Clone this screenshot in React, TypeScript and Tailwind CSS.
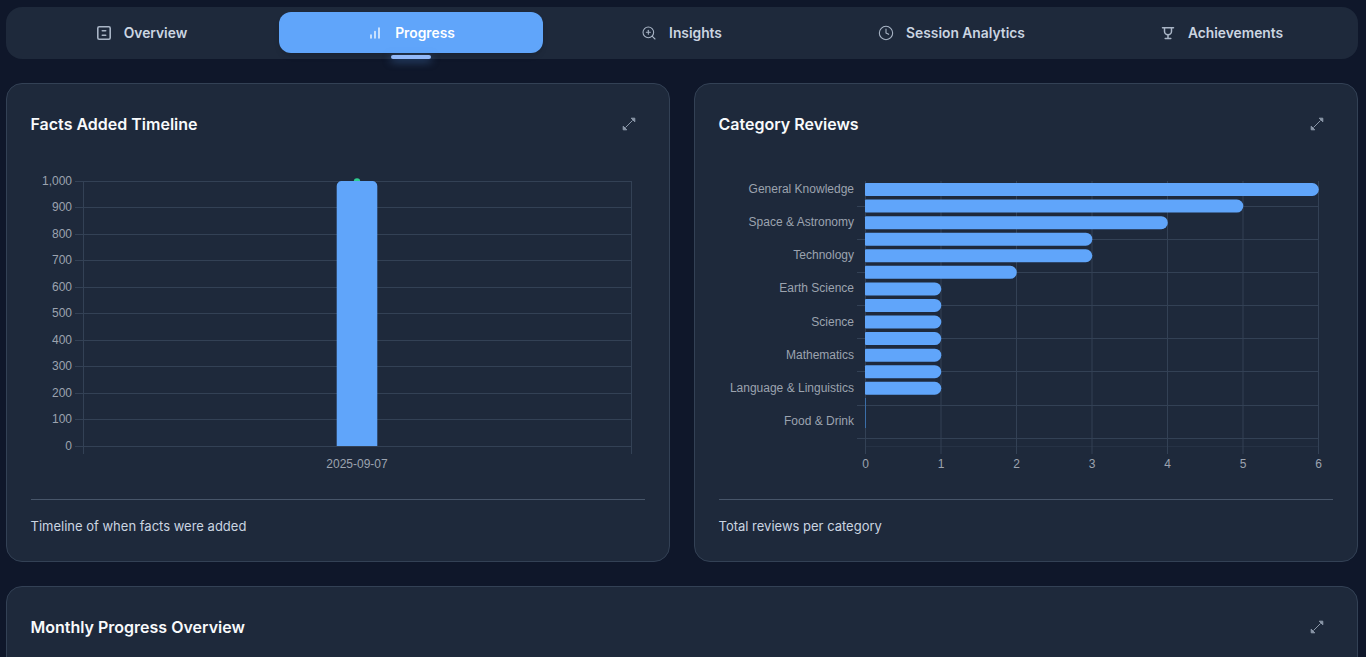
import { Clock, ZoomIn } from "lucide-react"
import type { ReactNode } from "react"

const grid = "#334155"
const tick = "#9ca3af"
const blue = "#60a5fa"

function OverviewIcon() {
  return (
    <svg width="16" height="16" viewBox="0 0 16 16" fill="none" stroke="currentColor" strokeWidth="1.6" strokeLinecap="round">
      <rect x="1.8" y="1.8" width="12.4" height="12.4" rx="1.4" />
      <path d="M6.3 5.8h3.4M6.3 10.2h3.4" />
    </svg>
  )
}

function ProgressIcon() {
  return (
    <svg width="16" height="16" viewBox="0 0 16 16" fill="none" stroke="currentColor" strokeWidth="1.3" strokeLinecap="round">
      <path d="M4 13v-3M8 13V6.5M12 13V3" />
    </svg>
  )
}

function TrophyIcon() {
  return (
    <svg width="16" height="16" viewBox="0 0 16 16" fill="none" stroke="currentColor" strokeWidth="1.5" strokeLinecap="round" strokeLinejoin="round">
      <path d="M2.5 2.8h11" />
      <path d="M4.5 2.8v3.4a3.5 3.5 0 0 0 7 0V2.8" />
      <path d="M8 9.7v3.3M5.2 13.6h5.6" />
    </svg>
  )
}

// arrow heads are filled in the picture, the shaft is thinner
function ExpandIcon() {
  return (
    <svg width="16" height="16" viewBox="0 0 16 16" fill="currentColor" stroke="currentColor" strokeWidth="1" strokeLinejoin="round">
      <path d="M10.2 2.2h3.6v3.6z" />
      <path d="M5.8 13.8H2.2v-3.6z" />
      <path d="M11.5 4.5l-7 7" fill="none" />
    </svg>
  )
}

const tabs: { label: string; icon: ReactNode; active?: boolean }[] = [
  { label: "Overview", icon: <OverviewIcon /> },
  { label: "Progress", icon: <ProgressIcon />, active: true },
  { label: "Insights", icon: <ZoomIn size={16} strokeWidth={1.6} /> },
  { label: "Session Analytics", icon: <Clock size={16} strokeWidth={1.6} /> },
  { label: "Achievements", icon: <TrophyIcon /> },
]

function Tab({ label, icon, active }: { label: string; icon: ReactNode; active?: boolean }) {
  return (
    <div
      className={
        active
          ? "relative flex h-[41px] items-center justify-center gap-3 rounded-xl bg-[#60a5fa] pt-px text-[13.8px] font-semibold text-white shadow-md"
          : "flex h-[41px] items-center justify-center gap-3 rounded-xl pl-px pt-px text-[13.8px] font-semibold text-[#cbd5e1]"
      }
    >
      <span className={active ? "text-white" : "text-[#a9b5c6]"}>{icon}</span>
      <span>{label}</span>
      {active && (
        <span className="absolute -bottom-[6px] left-1/2 h-1 w-10 -translate-x-1/2 rounded-full bg-[#93b9f8] shadow-[0_2px_8px_rgba(96,165,250,0.5)]" />
      )}
    </div>
  )
}

function CardHeader({ title }: { title: string }) {
  return (
    <div className="flex h-[80px] items-center justify-between">
      <h3 className="-ml-[0.5px] text-base font-semibold text-[#f8fafc]">{title}</h3>
      <span className="mr-2 text-[#8b97a8]">
        <ExpandIcon />
      </span>
    </div>
  )
}

function Card({ title, caption, children }: { title: string; caption: string; children: ReactNode }) {
  return (
    <div className="flex h-[479px] flex-col rounded-2xl border border-[#334155] bg-[#1e293b] px-6">
      <CardHeader title={title} />
      <div className="h-[335px]">{children}</div>
      <div className="border-t border-[#475569] pt-[17px] text-[13px] leading-[18px] text-[#cbd5e1]">
        <p className="-ml-[0.5px]">{caption}</p>
      </div>
    </div>
  )
}

function TimelineChart() {
  const yTicks = [1000, 900, 800, 700, 600, 500, 400, 300, 200, 100, 0]
  return (
    <svg viewBox="31 164 614 335" width="614" height="335" fontFamily="'Liberation Sans', sans-serif" fontSize="12">
      {yTicks.map((v, i) => {
        const y = Math.floor(181 + i * 26.5) + 0.5
        return (
          <g key={v}>
            <line x1="75" x2="632" y1={y} y2={y} stroke={grid} />
            <text x="72" y={y + 3.5} textAnchor="end" fill={tick}>
              {v.toLocaleString("en-US")}
            </text>
          </g>
        )
      })}
      <line x1="83.5" x2="83.5" y1="181" y2="454" stroke={grid} />
      <line x1="631.5" x2="631.5" y1="181" y2="454" stroke={grid} />
      <circle cx="357" cy="181.5" r="3.2" fill="#2ecc8f" />
      <path d="M336.7 446V186a5 5 0 0 1 5-5h30.6a5 5 0 0 1 5 5v260z" fill={blue} />
      <text x="357" y="468" textAnchor="middle" fill={tick}>
        2025-09-07
      </text>
    </svg>
  )
}

function ReviewsChart() {
  const values = [6, 5, 4, 3, 3, 2, 1, 1, 1, 1, 1, 1, 1, 0]
  const labels = ["General Knowledge", "Space & Astronomy", "Technology", "Earth Science", "Science", "Mathematics", "Language & Linguistics", "Food & Drink"]
  const x0 = 865.5
  const unit = 75.5
  const slot = 265 / 16
  return (
    <svg viewBox="719 164 614 335" width="614" height="335" fontFamily="'Liberation Sans', sans-serif" fontSize="12">
      {[0, 1, 2, 3, 4, 5, 6].map((v) => (
        <g key={v}>
          <line x1={x0 + v * unit} x2={x0 + v * unit} y1="181" y2="454" stroke={grid} />
          <text x={x0 + v * unit} y="468" textAnchor="middle" fill={tick}>
            {v}
          </text>
        </g>
      ))}
      {[0, 1, 2, 3, 4, 5, 6, 7].map((i) => {
        const y = Math.round(181 + (2 * i + 1.5) * slot) + 0.5
        return <line key={i} x1="857" x2="1319" y1={y} y2={y} stroke={grid} />
      })}
      <line x1="865" x2="1319" y1="446.5" y2="446.5" stroke={grid} strokeOpacity="0.4" />
      {labels.map((label, i) => (
        <text key={label} x="854" y={Math.round(181 + (2 * i + 0.5) * slot - 0.2) + 4} textAnchor="end" fill={tick}>
          {label}
        </text>
      ))}
      {values.map((v, i) => {
        const y = 181 + i * slot + 2
        const w = v * unit + 0.8
        return v > 0 ? (
          <path key={i} d={`M865 ${y + 1}a1 1 0 0 1 1-1H${865 + w - 6.5}a6.5 6.5 0 0 1 0 13H866a1 1 0 0 1-1-1z`} fill={blue} />
        ) : null
      })}
      <rect x="865" y="398" width="1" height="30" fill="#3b6ea8" />
    </svg>
  )
}

export default function App() {
  return (
    <div className="h-screen overflow-hidden bg-[#0f172a] pl-[6px] pr-2 pt-[7px] font-['Inter',sans-serif]">
      <div className="grid h-[52px] grid-cols-5 items-start gap-[6px] rounded-2xl bg-[#1e293b] pl-[3px] pr-[5px] pt-[5px]">
        {tabs.map((t) => (
          <Tab key={t.label} label={t.label} icon={t.icon} active={t.active} />
        ))}
      </div>
      <div className="mt-6 grid grid-cols-2 gap-6">
        <Card title="Facts Added Timeline" caption="Timeline of when facts were added">
          <TimelineChart />
        </Card>
        <Card title="Category Reviews" caption="Total reviews per category">
          <ReviewsChart />
        </Card>
      </div>
      <div className="mt-6 h-[300px] rounded-2xl border border-[#334155] bg-[#1e293b] px-6">
        <CardHeader title="Monthly Progress Overview" />
      </div>
    </div>
  )
}
